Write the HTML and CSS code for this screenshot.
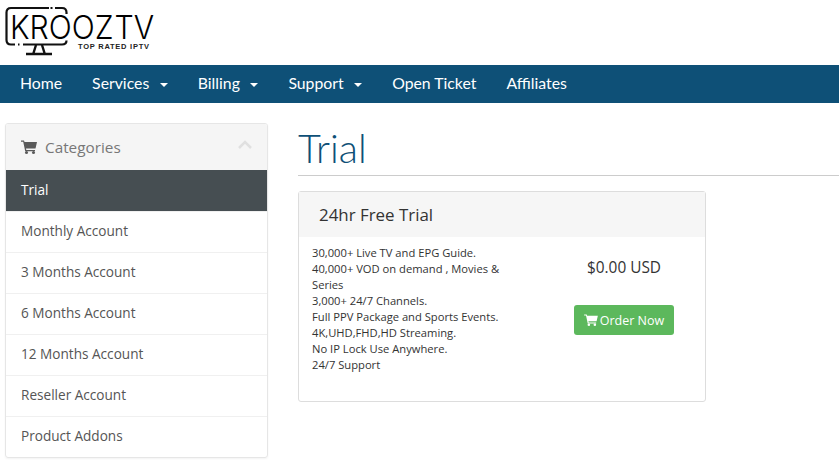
FILE: index.html
```html
<!DOCTYPE html>
<html lang="en">
<head>
<meta charset="utf-8">
<title>Trial</title>
<link rel="stylesheet" href="styles.css">
</head>
<body>
<header class="brand">
  <svg class="logo" width="165" height="58" viewBox="0 0 165 58" role="img" aria-label="KroozTV">
    <path class="logo-frame" d="M49 7H11Q6.500 7 6.500 11.500V39Q6.500 43.500 11 43.500H15"/>
    <path class="logo-frame" d="M50.500 7H52.500M18 43.500H19.500"/>
    <path class="logo-frame" d="M55 7H62Q66.500 7 66.500 11.500V13"/>
    <path class="logo-frame" d="M23 43.500H62Q66.500 43.500 66.500 39.500"/>
    <path class="logo-stand" d="M36 44L33.500 52M42 44L44.500 52M26 53H52"/>
    <text class="logo-main" x="10" y="38" textLength="144" lengthAdjust="spacingAndGlyphs">KROOZ TV</text>
    <text class="logo-sub" x="78" y="48" textLength="71" lengthAdjust="spacing">TOP RATED IPTV</text>
  </svg>
</header>
<nav class="navbar">
  <a class="nav-link" href="#">Home</a>
  <a class="nav-link" href="#">Services<span class="caret"></span></a>
  <a class="nav-link" href="#">Billing<span class="caret"></span></a>
  <a class="nav-link" href="#">Support<span class="caret"></span></a>
  <a class="nav-link" href="#">Open Ticket</a>
  <a class="nav-link" href="#">Affiliates</a>
</nav>
<div class="layout">
  <aside class="sidebar">
    <div class="side-head">
      <svg class="cart-icon" width="16" height="14" viewBox="0 0 16 14"><path d="M0 0.500H3L3.500 2H16L14.500 8.500H5L5.300 10H14V11.200H4.200L2.200 1.700H0Z"/><circle cx="5.500" cy="12.500" r="1.500"/><circle cx="12.500" cy="12.500" r="1.500"/></svg>
      <span class="side-title">Categories</span>
      <svg class="chevron" width="14" height="9" viewBox="0 0 14 9"><path d="M1 8L7 2L13 8"/></svg>
    </div>
    <a class="side-item active" href="#">Trial</a>
    <a class="side-item" href="#">Monthly Account</a>
    <a class="side-item" href="#">3 Months Account</a>
    <a class="side-item" href="#">6 Months Account</a>
    <a class="side-item" href="#">12 Months Account</a>
    <a class="side-item" href="#">Reseller Account</a>
    <a class="side-item" href="#">Product Addons</a>
  </aside>
  <main class="main">
    <h1 class="page-title">Trial</h1>
    <section class="card">
      <h2 class="card-head">24hr Free Trial</h2>
      <div class="card-body">
        <p class="features">30,000+ Live TV and EPG Guide.<br>40,000+ VOD on demand , Movies &amp; Series<br>3,000+ 24/7 Channels.<br>Full PPV Package and Sports Events.<br>4K,UHD,FHD,HD Streaming.<br>No IP Lock Use Anywhere.<br>24/7 Support</p>
        <div class="buy">
          <div class="price">$0.00 USD</div>
          <a class="order-btn" href="#">
            <svg class="btn-cart" width="14" height="12" viewBox="0 0 16 14"><path d="M0 0.500H3L3.500 2H16L14.500 8.500H5L5.300 10H14V11.200H4.200L2.200 1.700H0Z"/><circle cx="5.500" cy="12.500" r="1.500"/><circle cx="12.500" cy="12.500" r="1.500"/></svg>Order Now
          </a>
        </div>
      </div>
    </section>
  </main>
</div>
</body>
</html>
```
FILE: styles.css
```css
* { box-sizing: border-box; }
html, body { margin: 0; height: 475px; overflow: hidden; }
body { background: #fff; color: #333; font-family: "Open Sans", sans-serif; }
a { text-decoration: none; }

.brand { height: 65px; padding-top: 1px; }
.logo { display: block; }
.logo-frame { fill: none; stroke: #111; stroke-width: 2.2; }
.logo-stand { fill: none; stroke: #111; stroke-width: 2.4; }
.logo-main { font-family: "Inter", sans-serif; font-weight: 300; font-size: 32px; word-spacing: -8px; fill: #000; }
.logo-sub { font-family: "Liberation Sans", sans-serif; font-weight: 700; font-size: 7.5px; fill: #222; }

.navbar { height: 38px; background: #0e5077; display: flex; align-items: center; padding: 0 0 3px 5px; }
.nav-link { color: #fff; font-family: "Lato", sans-serif; font-size: 15.8px; padding: 0 15px; white-space: nowrap; }
.caret { display: inline-block; margin-left: 10.500px; vertical-align: middle; border-top: 4px solid #fff; border-left: 4px solid transparent; border-right: 4px solid transparent; }

.layout { display: grid; grid-template-columns: 263px 541px; column-gap: 30px; padding: 20px 0 0 5px; }

.sidebar { border: 1px solid #e6e6e6; border-radius: 3px; height: 335px; box-shadow: 0 1px 2px rgba(0,0,0,.05); overflow: hidden; }
.side-head { height: 46px; background: #f5f5f5; display: flex; align-items: center; padding: 0 15px; }
.cart-icon { fill: #5a5a5a; margin-right: 8px; flex: none; }
.side-title { font-size: 15.3px; color: #777; flex: 1; }
.chevron { fill: none; stroke: #e0e0e0; stroke-width: 2.5; margin-bottom: 5px; }
.side-item { display: flex; align-items: center; height: 41px; padding: 0 15px 3px; font-size: 13.6px; color: #555; border-top: 1px solid #f0f0f0; }
.side-item.active { background: #464e52; color: #fff; border-top: 0; padding-bottom: 2px; }

.main { min-width: 0; }
.page-title { margin: 0; height: 53px; line-height: 50px; font-family: "Lato", sans-serif; font-weight: 300; font-size: 39.500px; color: #0e5077; border-bottom: 1px solid #ccc; }
.card { margin-top: 15px; width: 408px; height: 211px; border: 1px solid #ddd; border-radius: 3px; }
.card-head { margin: 0; height: 45px; background: #f6f6f6; font-weight: 400; font-size: 16.900px; line-height: 45px; padding-left: 20px; color: #333; }
.card-body { display: grid; grid-template-columns: 200px 1fr; column-gap: 44px; padding: 8px 13px; }
.features { margin: 0; font-size: 11.2px; line-height: 16px; color: #333; }
.buy { display: flex; flex-direction: column; align-items: center; padding-top: 11px; }
.price { font-size: 15.4px; line-height: 24px; color: #333; }
.order-btn { margin-top: 25px; width: 100px; height: 30px; background: #5cb85c; border-radius: 3px; color: #fff; font-size: 12.5px; display: flex; align-items: center; justify-content: center; gap: 2px; }
.btn-cart { fill: #fff; }
```
